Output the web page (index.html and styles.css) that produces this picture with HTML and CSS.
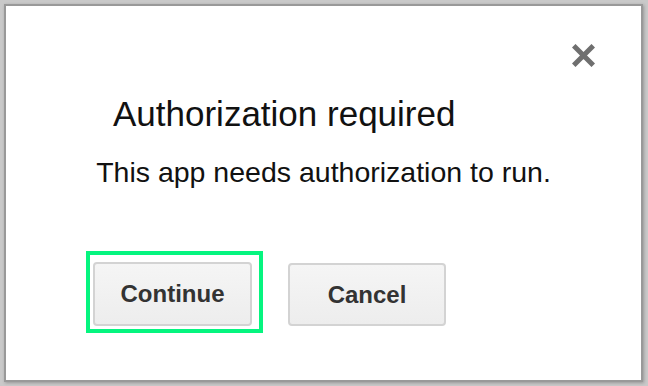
FILE: index.html
```html
<!DOCTYPE html>
<html>

<head>
	<meta charset="utf-8">
	<title>Authorization required</title>
	<meta name="viewport" content="width=device-width, initial-scale=1">
	<link rel="stylesheet" href="styles.css">
</head>

<body>
	<div class='dialog'>
		<div class='dialog__top'>
			<button class='dialog__close' aria-label='Close'>
				<svg width='23' height='23' viewBox='0 0 23 23'>
					<path d='M3.5 3.5 L19.5 19.5 M19.5 3.5 L3.5 19.5' stroke='#6f6f6f' stroke-width='5' stroke-linecap='square' fill='none' />
				</svg>
			</button>
		</div>
		<h1 class='dialog__hed'>Authorization required</h1>
		<p class='dialog__dek'>This app needs authorization to run.</p>
		<div class='dialog__actions'>
			<div class='focus-ring'>
				<button class='btn'>Continue</button>
			</div>
			<button class='btn btn--cancel'>Cancel</button>
		</div>
	</div>
</body>

</html>
```

FILE: styles.css
```css
/* page */

* {
	box-sizing: border-box;
}

html,
body {
	margin: 0;
	padding: 0;
	height: 100%;
	font-family: Arial, 'Liberation Sans', Helvetica, sans-serif;
}

body {
	padding: 4px 5px 4px 4px;
	background: #c9c9c9;
	color: #111;
}

h1,
p {
	margin: 0;
	font-weight: 400;
}

/* dialog */

.dialog {
	height: 100%;
	background: #fff;
	border: 2px solid #999;
	box-shadow: 1px 1px 3px rgba(0, 0, 0, 0.25);
	padding-top: 38px;
}

.dialog__top {
	display: flex;
	justify-content: flex-end;
	padding-right: 46px;
}

.dialog__close {
	display: block;
	width: 23px;
	height: 23px;
	padding: 0;
	margin: 0;
	border: 0;
	background: none;
	filter: blur(0.5px);
}

.dialog__close svg {
	display: block;
}

.dialog__hed {
	margin-top: 27px;
	padding-left: 107px;
	font-size: 35px;
	line-height: 40px;
	color: #111;
}

.dialog__dek {
	margin-top: 21px;
	text-align: center;
	font-size: 28.5px;
	line-height: 34px;
	color: #111;
}

.dialog__actions {
	display: flex;
	align-items: flex-start;
	margin-top: 62px;
	padding-left: 80px;
}

.focus-ring {
	border: 4px solid #05f57f;
	padding: 7px 7px 3px 3px;
}

.btn {
	display: block;
	width: 159px;
	height: 64px;
	margin: 0;
	padding: 0;
	border: 2px solid #d3d3d3;
	border-radius: 4px;
	background: linear-gradient(#f5f5f5, #ededed);
	font-family: Arial, 'Liberation Sans', Helvetica, sans-serif;
	font-size: 24px;
	font-weight: 700;
	color: #333;
}

.btn--cancel {
	width: 158px;
	height: 63px;
	margin-top: 12px;
	margin-left: 25px;
}
```
